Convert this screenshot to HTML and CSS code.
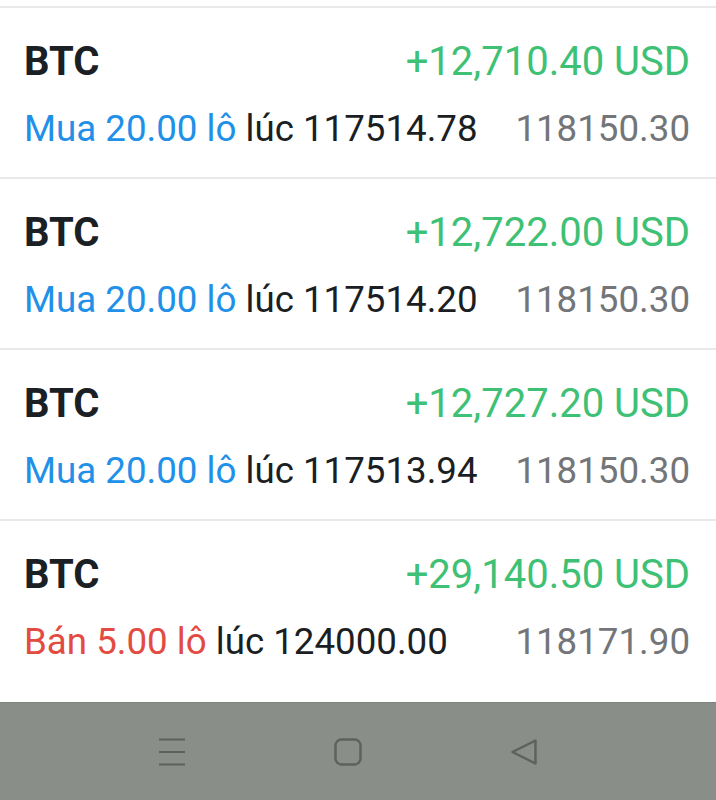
FILE: index.html
```html
<!DOCTYPE html>
<html lang="vi">

<head>
    <meta charset="UTF-8">
    <meta name="viewport" content="width=device-width, initial-scale=1.0">
    <title>Lệnh đang mở</title>
    <link rel="stylesheet" href="styles.css">
</head>

<body>
    <div class="positions">
        <div class="position">
            <div class="line">
                <span class="symbol">BTC</span>
                <span class="profit">+12,710.40 USD</span>
            </div>
            <div class="line">
                <span><span class="buy">Mua 20.00 lô</span> lúc 117514.78</span>
                <span class="price">118150.30</span>
            </div>
        </div>
        <div class="position">
            <div class="line">
                <span class="symbol">BTC</span>
                <span class="profit">+12,722.00 USD</span>
            </div>
            <div class="line">
                <span><span class="buy">Mua 20.00 lô</span> lúc 117514.20</span>
                <span class="price">118150.30</span>
            </div>
        </div>
        <div class="position">
            <div class="line">
                <span class="symbol">BTC</span>
                <span class="profit">+12,727.20 USD</span>
            </div>
            <div class="line">
                <span><span class="buy">Mua 20.00 lô</span> lúc 117513.94</span>
                <span class="price">118150.30</span>
            </div>
        </div>
        <div class="position last">
            <div class="line">
                <span class="symbol">BTC</span>
                <span class="profit">+29,140.50 USD</span>
            </div>
            <div class="line">
                <span><span class="sell">Bán 5.00 lô</span> lúc 124000.00</span>
                <span class="price">118171.90</span>
            </div>
        </div>
    </div>

    <!-- Android navigation bar -->
    <div class="nav-bar">
        <svg class="nav-icon" width="28" height="28" viewBox="0 0 28 28">
            <path d="M1 1.5h26M1 14h26M1 26.5h26" stroke="#5d605c" stroke-width="2.2" fill="none" />
        </svg>
        <svg class="nav-icon" width="28" height="28" viewBox="0 0 28 28">
            <rect x="1.5" y="1.5" width="25" height="25" rx="6" stroke="#5d605c" stroke-width="2.4" fill="none" />
        </svg>
        <svg class="nav-icon" width="28" height="28" viewBox="0 0 28 28">
            <path d="M25.5 2.5v23L2.5 14z" stroke="#5d605c" stroke-width="2.4" stroke-linejoin="round" fill="none" />
        </svg>
    </div>
</body>

</html>
```

FILE: styles.css
```css
body {
    margin: 0;
    background-color: white;
    font-family: Roboto, "Noto Sans", sans-serif;
}

.positions {
    padding-top: 6px;
    height: 696px;
}

/* One open order */
.position {
    display: flex;
    flex-direction: column;
    gap: 21px;
    padding: 30px 26px 0 24px;
    box-sizing: border-box;
    border-top: 2px solid #e9e9e9;
    height: 171px;
}

.position.last {
    height: 182px;
}

.line {
    display: flex;
    justify-content: space-between;
    align-items: baseline;
    font-size: 36.7px;
    line-height: 44px;
    color: #1b1f23;
}

.line:first-child {
    font-size: 40px;
    line-height: 48px;
}

.symbol {
    font-weight: bold;
    color: #1b2024;
}

.profit {
    color: #3fc175;
}

.buy {
    color: #2190e8;
}

.sell {
    color: #e24b42;
}

.price {
    color: #737578;
}

/* Bottom system bar */
.nav-bar {
    display: flex;
    justify-content: center;
    align-items: center;
    gap: 148px;
    height: 98px;
    padding-right: 20px;
    background-color: #8a8e88;
    border-top: 1px solid #7f837d;
    box-sizing: border-box;
}
```
